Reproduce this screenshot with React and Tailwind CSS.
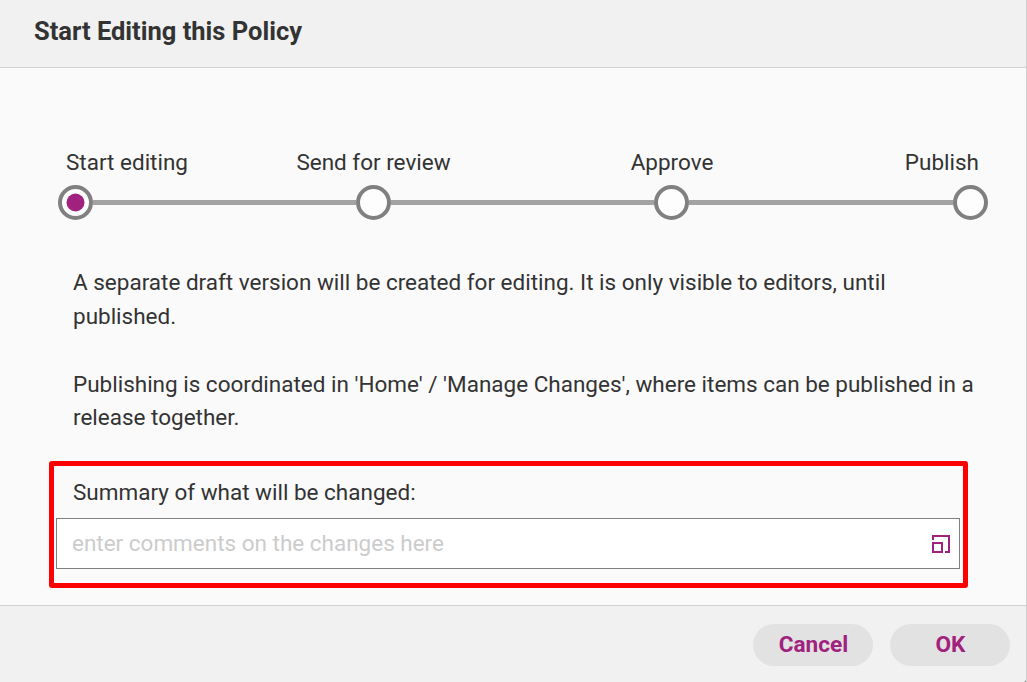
import { useState } from 'react';

const steps = [
  { label: 'Start editing', active: true, labelClass: 'left-1' },
  { label: 'Send for review', labelClass: 'left-1/2 -translate-x-1/2' },
  { label: 'Approve', labelClass: 'left-1/2 -translate-x-1/2 ml-[0.5px]' },
  { label: 'Publish', labelClass: 'right-[5px]' },
];

function Step({ label, active, labelClass }) {
  return (
    <div className="relative w-[35px] h-[35px] shrink-0 rounded-full border-4 border-[#808080] bg-[#fdfdfd] flex items-center justify-center">
      <span className={`absolute -top-[44px] leading-[34px] whitespace-nowrap ${labelClass}`}>{label}</span>
      {active && <span className="w-[18px] h-[18px] rounded-full bg-[#a0227e] -translate-x-[0.5px] -translate-y-[0.5px]" />}
    </div>
  );
}

function ExpandIcon() {
  return (
    <svg width="18" height="18" viewBox="0 0 18 18" fill="none" stroke="#a0227e" strokeWidth="2">
      <path d="M1 5V1H17V17H13" />
      <rect x="1" y="8" width="9" height="9" />
    </svg>
  );
}

function Button({ children }) {
  return (
    <button className="w-[120px] h-[42px] pb-px pl-px rounded-full bg-[#e2e2e2] text-[#a0227e] font-bold text-[22.6px] leading-[27px]">
      {children}
    </button>
  );
}

export default function App() {
  const [comment, setComment] = useState('');

  return (
    <div className="relative w-[1027px] h-[682px] flex flex-col overflow-hidden border-r border-[#d0d0d0] bg-[#fafafa] text-[#333] text-[22.49px] font-['Roboto',sans-serif]">
      <header className="h-[68px] shrink-0 bg-[#f1f1f1] border-b border-[#d0d0d0] pl-[34px] pb-[5px] flex items-center">
        <h1 className="text-[25.5px] font-bold">Start Editing this Policy</h1>
      </header>

      <main className="flex-1 flex flex-col">
        <div className="mt-[117px] ml-[58px] w-[930px] flex items-center">
          {steps.map((step, i) => (
            <div key={step.label} className={`flex items-center ${i === 0 ? '' : i === 3 ? 'w-[299px]' : 'w-[298px]'}`}>
              {i > 0 && <div className="flex-1 h-[5px] bg-[#a3a3a3]" />}
              <Step {...step} />
            </div>
          ))}
        </div>

        <div className="mt-[46px] ml-[73px] w-[910px] leading-[33.8px]">
          <p>A separate draft version will be created for editing. It is only visible to editors, until published.</p>
          <p className="mt-[34px]">
            Publishing is coordinated in 'Home' / 'Manage Changes', where items can be published in a release together.
          </p>
        </div>

        <section className="mt-[26px] ml-[49px] w-[919px] h-[127px] border-5 border-[#ff0000] rounded-[3px] pl-0.5 pr-[3px]">
          <label htmlFor="summary" className="block h-[52px] pt-[9px] pl-[17px] leading-[34px]">
            Summary of what will be changed:
          </label>
          <div className="h-[51px] bg-white border border-[#808080] flex items-center pl-[15px] pr-[9px]">
            <input
              id="summary"
              value={comment}
              onChange={(e) => setComment(e.target.value)}
              placeholder="enter comments on the changes here"
              className="flex-1 outline-none placeholder:text-[#ccc]"
            />
            <ExpandIcon />
          </div>
        </section>
      </main>

      <footer className="h-[77px] shrink-0 bg-[#f1f1f1] border-t border-[#d0d0d0] pt-[18px] pr-4 flex justify-end gap-[17px]">
        <Button>Cancel</Button>
        <Button>OK</Button>
      </footer>

      {/* resize grip */}
      <svg className="absolute -right-px bottom-0" width="3" height="3" viewBox="0 0 3 3" fill="#999">
        <path d="M3 0V3H0Z" />
      </svg>
    </div>
  );
}
